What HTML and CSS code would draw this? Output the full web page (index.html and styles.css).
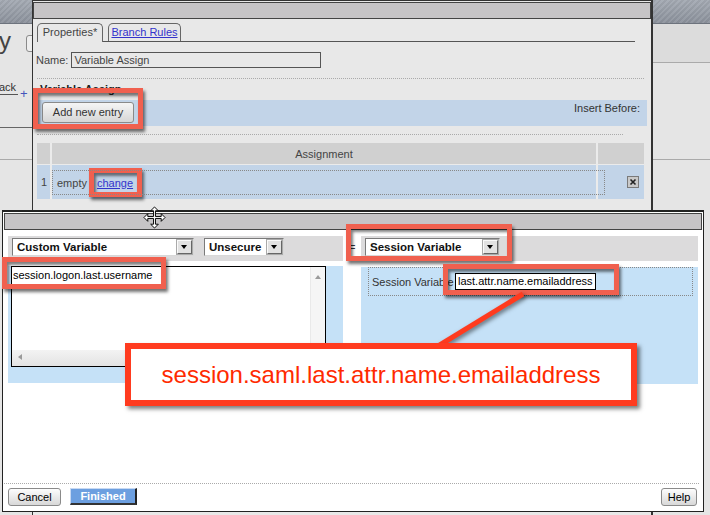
FILE: index.html
```html
<!DOCTYPE html>
<html lang="en">
<head>
<meta charset="utf-8">
<title>Variable Assign</title>
<link rel="stylesheet" href="styles.css">
</head>
<body>
<div class="backdrop">
  <div class="bd-bar"></div>
  <div class="bd-right-head"></div>
  <div class="bd-right-rule"></div>
  <span class="bd-y">y</span>
  <span class="bd-btn"></span>
  <span class="bd-ack">ack</span>
  <span class="bd-ack-rule"></span>
  <span class="bd-plus">+</span>
  <div class="bd-rule dark"></div>
  <div class="bd-rule light"></div>
</div>

<div class="win win-props">
  <div class="titlebar"></div>
  <div class="props-body">
    <div class="tabs">
      <span class="tab active">Properties*</span>
      <span class="tab"><a href="#">Branch Rules</a></span>
    </div>
    <div class="name-row">
      <span class="lbl">Name:</span>
      <span class="field name-field">Variable Assign</span>
    </div>
    <div class="dots wide"></div>
    <div class="section-title">Variable Assign</div>
    <div class="band">
      <span class="btn add-btn">Add new entry</span>
      <span class="insert">Insert Before:</span>
    </div>
    <div class="dots narrow"></div>
    <div class="grid">
      <div class="gh"></div>
      <div class="gh title">Assignment</div>
      <div class="gh"></div>
      <div class="gr num">1</div>
      <div class="gr"><div class="entry"><span>empty</span><a href="#">change</a></div></div>
      <div class="gr del">
        <svg width="12" height="12" viewBox="0 0 12 12"><rect x="0.5" y="0.5" width="11" height="11" fill="#c9c9c9" stroke="#7a7a7a"/><path d="M3.5 3.5 L8.5 8.5 M8.5 3.5 L3.5 8.5" stroke="#222" stroke-width="1.6"/></svg>
      </div>
    </div>
  </div>
</div>

<div class="win win-edit">
  <div class="titlebar"></div>
  <div class="edit-body">
    <div class="panels">
      <div class="panel left">
        <div class="phead">
          <div class="sel w-custom">Custom Variable<span class="arr"></span></div>
          <div class="sel w-unsec">Unsecure<span class="arr"></span></div>
        </div>
        <div class="pbody">
          <div class="ta">
            <div class="ta-text">session.logon.last.username</div>
            <div class="vscroll"><span class="up"></span></div>
            <div class="hscroll"><span class="leftarr"></span></div>
            <div class="corner"></div>
          </div>
        </div>
      </div>
      <div class="eq">=</div>
      <div class="panel right">
        <div class="phead">
          <div class="sel w-sess">Session Variable<span class="arr"></span></div>
        </div>
        <div class="pbody">
          <div class="assign-row">
            <span class="lbl2">Session Variable</span>
            <span class="field email">last.attr.name.emailaddress</span>
          </div>
        </div>
      </div>
    </div>
    <div class="footer">
      <span class="btn cancel">Cancel</span>
      <span class="btn finished">Finished</span>
      <span class="btn help">Help</span>
    </div>
  </div>
</div>

<svg class="move-cursor" width="23" height="23" viewBox="0 0 24 24">
  <path d="M12 1 L16 5 L13 5 L13 11 L19 11 L19 8 L23 12 L19 16 L19 13 L13 13 L13 19 L16 19 L12 23 L8 19 L11 19 L11 13 L5 13 L5 16 L1 12 L5 8 L5 11 L11 11 L11 5 L8 5 Z" fill="#fff" stroke="#000" stroke-width="1" stroke-linejoin="miter"/>
</svg>

<div class="hl hl-add"></div>
<div class="hl hl-change"></div>
<div class="hl hl-logon"></div>
<div class="hl hl-sess"></div>
<div class="hl hl-email"></div>

<svg class="pointer" width="140" height="70" viewBox="0 0 140 70">
  <path d="M123 9 L30 66" stroke="#ff3b1f" stroke-width="5" stroke-linecap="butt"/>
</svg>
<div class="callout">session.saml.last.attr.name.emailaddress</div>
</body>
</html>
```

FILE: styles.css
```css
* { box-sizing: border-box; }
html, body { margin: 0; padding: 0; }
body {
  position: relative;
  width: 710px;
  height: 515px;
  overflow: hidden;
  background: #e8e8e8;
  font-family: "Liberation Sans", Arial, sans-serif;
  font-size: 11px;
  color: #333;
}
a { color: #3333cc; text-decoration: underline; }

/* ---------- backdrop page ---------- */
.backdrop { position: absolute; inset: 0; background: #e5e5e5; }
.bd-bar {
  position: absolute; left: 0; top: 0; width: 710px; height: 24px;
  background:
    repeating-linear-gradient(135deg, rgba(255,255,255,.06) 0 2px, rgba(0,0,0,.04) 2px 4px),
    linear-gradient(#a4aab3, #8c929c);
  border-bottom: 1px solid #6d737d;
}
.bd-right-head {
  position: absolute; left: 653px; top: 24px; width: 57px; height: 39px;
  background: #dcdcdc; border-bottom: 1px solid #aaa;
}
.bd-right-rule { position: absolute; left: 653px; top: 159px; width: 57px; border-top: 1px solid #aaa; }
.bd-y { position: absolute; left: -1px; top: 29px; font-size: 24px; line-height: 24px; color: #444; }
.bd-btn {
  position: absolute; left: 26px; top: 35px; width: 14px; height: 17px;
  border: 1px solid #8a8a8a; border-radius: 3px; background: #eee;
}
.bd-ack { position: absolute; left: -1px; top: 81px; color: #333; }
.bd-ack-rule { position: absolute; left: 0; top: 94px; width: 18px; border-top: 1px solid #555; }
.bd-plus { position: absolute; left: 20px; top: 86px; color: #4455bb; font-size: 13px; }
.bd-rule { position: absolute; left: 0; width: 32px; }
.bd-rule.dark { top: 127px; border-top: 1px solid #666; }
.bd-rule.light { top: 159px; border-top: 1px solid #aaa; }

/* ---------- windows ---------- */
.win { position: absolute; border: 1px solid #333; }
.titlebar { height: 17px; background: #c6c4c6; border: 1px solid #444; }

.win-props {
  left: 32px; top: 0; width: 621px; height: 530px;
  background: #e8e8e8; border-right-width: 2px; padding-top: 1px;
}
.props-body { padding: 4px 0 0 4px; }

.tabs {
  display: flex; gap: 5px; align-items: flex-end;
  width: 598px; height: 19px; border-bottom: 1px solid #555;
}
.tab {
  height: 18px; border: 1px solid #666; border-bottom: none;
  border-radius: 5px 5px 0 0; line-height: 17px; text-align: center; color: #444;
  width: 73px;
}
.tab.active { width: 66px; height: 19px; margin-bottom: -1px; background: #e8e8e8; }

.name-row { display: flex; align-items: center; height: 16px; margin-top: 10px; }
.lbl { margin-left: -1px; color: #444; }
.field { display: block; height: 16px; border: 1px solid #555; line-height: 14px; padding: 0 2px; }
.name-field { width: 250px; margin-left: 3px; background: #e8e8e8; color: #444; }

.dots { border-top: 1px dotted #aaa; }
.dots.wide { margin-top: 10px; width: 607px; }
.dots.narrow { margin-top: 8px; width: 586px; }

.section-title { margin-top: 4px; height: 13px; line-height: 13px; padding-left: 3px; font-weight: bold; color: #222; }

.band {
  margin-top: 4px; width: 610px; height: 26px; background: #c2d4e8;
  display: flex; justify-content: space-between; align-items: flex-start;
  padding: 2px 7px 0 5px;
}
.btn { display: block; text-align: center; }
.add-btn {
  width: 92px; height: 21px; line-height: 19px;
  border: 1px solid #8a8a8a; border-radius: 3px;
  background: linear-gradient(#f5f5f5, #d6d6d6); color: #333;
}
.insert { line-height: 13px; margin-top: 0; color: #333; }

.grid {
  margin-top: 8px; width: 607px;
  display: grid; grid-template-columns: 13px 544px 46px; grid-template-rows: 21px 34px;
  column-gap: 2px; row-gap: 1px; background: #ebebeb;
}
.gh { background: #d0d0d0; }
.gh.title { display: flex; align-items: center; justify-content: center; color: #444; }
.gr { background: #c2d4e8; }
.num { display: flex; align-items: center; padding-left: 4px; color: #444; }
.entry {
  position: relative; z-index: 1;
  width: 553px; height: 25px; margin-top: 5px;
  border: 1px dotted #888; display: flex; align-items: center; gap: 10px;
  padding-left: 4px; color: #444;
}
.del { display: flex; align-items: center; justify-content: flex-end; padding-right: 5px; }
.del svg { display: block; }

/* ---------- edit dialog ---------- */
.win-edit {
  left: 2px; top: 210px; width: 702px; height: 302px;
  background: #fff; border-color: #222; border-top-width: 2px;
  padding: 1px 1px 0; display: flex; flex-direction: column;
}
.edit-body { flex: 1; display: flex; flex-direction: column; padding-top: 6px; }
.panels { display: flex; margin-left: 4px; }
.panel.left { width: 335px; }
.panel.right { width: 337px; }
.phead { height: 25px; background: #dcdbdc; display: flex; gap: 10px; padding: 2px 4px 0; }
.pbody { height: 117px; background: #c5e1f7; }
.eq { width: 18px; text-align: center; padding-top: 4px; font-size: 12px; color: #333; }

.sel {
  height: 18px; background: #fff;
  border: 1px solid; border-color: #7a7a7a #d8d8d8 #d8d8d8 #7a7a7a;
  display: flex; align-items: center; padding-left: 4px;
  font-weight: bold; font-size: 11.5px; color: #111;
}
.w-custom { width: 182px; }
.w-unsec { width: 80px; }
.w-sess { width: 135px; }
.arr {
  position: relative; margin-left: auto; margin-right: 1px;
  width: 15px; height: 14px; background: #e2e2e2;
  border: 1px solid; border-color: #fafafa #666 #666 #fafafa;
  box-shadow: 0 0 0 1px #aaa;
}
.arr::after {
  content: ""; position: absolute; left: 3px; top: 4px;
  border-left: 3.5px solid transparent; border-right: 3.5px solid transparent;
  border-top: 4px solid #000;
}

.ta {
  margin: 5px 0 0 3px; width: 315px; height: 101px;
  border: 1px solid #000; background: #fff;
  display: grid; grid-template-columns: 1fr 15px; grid-template-rows: 1fr 16px;
}
.ta-text { padding: 2px 1px; line-height: 13px; color: #000; }
.vscroll { position: relative; background: #f5f5f5; border-left: 1px solid #e9e9e9; }
.up {
  position: absolute; left: 4px; top: 8px;
  border-left: 3.5px solid transparent; border-right: 3.5px solid transparent;
  border-bottom: 4px solid #9a9a9a;
}
.hscroll { position: relative; background: linear-gradient(#f3f3f3, #e3e3e3); }
.leftarr {
  position: absolute; left: 6px; top: 4px;
  border-top: 3.5px solid transparent; border-bottom: 3.5px solid transparent;
  border-right: 4px solid #9a9a9a;
}
.corner { background: #ececec; }

.assign-row {
  margin: 6px 0 0 7px; width: 325px; height: 29px;
  border: 1px dotted #888; display: flex; align-items: center; padding-left: 3px;
}
.lbl2 { width: 83px; color: #333; white-space: nowrap; }
.email { width: 141px; height: 17px; border: 1px solid #000; background: #fff; color: #000; line-height: 15px; }

.footer {
  margin-top: auto; margin-right: 3px;
  border-top: 1px dotted #aaa;
  display: flex; align-items: flex-start;
  padding: 4px 2px 5px 4px;
}
.cancel, .help {
  height: 18px; line-height: 16px; color: #000;
  border: 1px solid #8a8a8a; border-radius: 3px;
  background: linear-gradient(#fdfdfd, #d8d8d8);
}
.cancel { width: 53px; }
.help { width: 36px; margin-left: auto; }
.finished {
  margin-left: 9px; width: 67px; height: 17px; line-height: 15px;
  background: #6c9fe0; color: #fff; font-weight: bold;
  border-top: 1px solid #c7d9f3; border-left: 1px solid #c7d9f3;
  border-right: 2px solid #222; border-bottom: 2px solid #333;
}

/* ---------- overlays ---------- */
.move-cursor { position: absolute; left: 143px; top: 206px; }

.hl {
  position: absolute;
  border: 5px solid #f0604f;
  box-shadow: 2px 3px 3px rgba(0,0,0,.55), inset 2px 3px 3px rgba(0,0,0,.5);
}
.hl-add { left: 33px; top: 88px; width: 110px; height: 41px; }
.hl-change { left: 89px; top: 168px; width: 53px; height: 29px; }
.hl-logon { left: 2px; top: 257px; width: 164px; height: 32px; }
.hl-sess { left: 346px; top: 224px; width: 166px; height: 37px; }
.hl-email { left: 443px; top: 264px; width: 176px; height: 31px; }

.pointer { position: absolute; left: 400px; top: 285px; filter: drop-shadow(2px 2px 2px rgba(0,0,0,.5)); }
.callout {
  position: absolute; left: 125px; top: 343px; width: 512px; height: 63px;
  border: 6px solid #ff3b1f; background: #fff;
  box-shadow: 3px 3px 4px rgba(0,0,0,.5);
  display: flex; align-items: center; justify-content: center;
  color: #ff2a00; font-size: 24px;
}
```
